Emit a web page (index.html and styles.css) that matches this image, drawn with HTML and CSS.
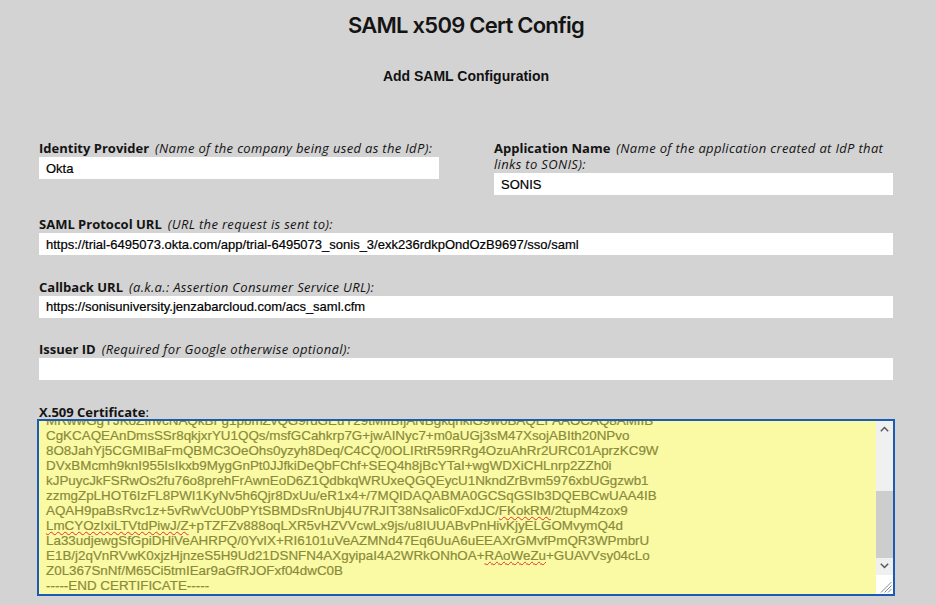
FILE: index.html
```html
<!DOCTYPE html>
<html lang="en">
<head>
<meta charset="utf-8">
<title>SAML x509 Cert Config</title>
<link rel="stylesheet" href="styles.css">
</head>
<body>
<div class="page">
  <h1 class="title">SAML x509 Cert Config</h1>
  <h2 class="subtitle">Add SAML Configuration</h2>
  <form class="form">
    <div class="row">
      <div class="field">
        <label class="label"><b class="name">Identity Provider</b><i class="hint">(Name of the company being used as the IdP):</i></label>
        <input class="input" type="text" value="Okta">
      </div>
      <div class="field">
        <label class="label"><b class="name">Application Name</b><i class="hint">(Name of the application created at IdP that links to SONIS):</i></label>
        <input class="input" type="text" value="SONIS">
      </div>
    </div>
    <div class="field">
      <label class="label"><b class="name">SAML Protocol URL</b><i class="hint">(URL the request is sent to):</i></label>
      <input class="input" type="text" value="https://trial-6495073.okta.com/app/trial-6495073_sonis_3/exk236rdkpOndOzB9697/sso/saml">
    </div>
    <div class="field">
      <label class="label"><b class="name">Callback URL</b><i class="hint">(a.k.a.: Assertion Consumer Service URL):</i></label>
      <input class="input" type="text" value="https://sonisuniversity.jenzabarcloud.com/acs_saml.cfm">
    </div>
    <div class="field">
      <label class="label"><b class="name">Issuer ID</b><i class="hint">(Required for Google otherwise optional):</i></label>
      <input class="input" type="text" value="">
    </div>
    <div class="field">
      <label class="label"><b class="name">X.509 Certificate</b>:</label>
      <div class="cert-box">
        <div class="cert" role="textbox" aria-multiline="true"><pre class="cert-text">-----BEGIN CERTIFICATE-----
MIIDqjCCApKgAwIBAgIGAYhJkz3bMA0GCSqGSIb3DQEBCwUAMIGVMQswCQYDVQQGEwJVUzETMBEG
A1UECAwKQ2FsaWZvcm5pYTEWMBQGA1UEBwwNU2FuIEZyYW5jaXNjbzENMAsGA1UECgwET2t0YTEU
MBIGA1UECwwLU1NPUHJvdmlkZXIxFjAUBgNVBAMMDXRyaWFsLTY0OTUwNzMxHDAaBgkqhkiG9w0B
CQEWDWluZm9Ab2t0YS5jb20wHhcNMjMwNjA1MTQyMzE0WhcNMzMwNjA1MTQyNDE0WjCBlTELMAkG
A1UEBhMCVVMxEzARBgNVBAgMCkNhbGlmb3JuaWExFjAUBgNVBAcMDVNhbiBGcmFuY2lzY28xDTAL
BgNVBAoMBE9rdGExFDASBgNVBAsMC1NTT1Byb3ZpZGVyMRYwFAYDVQQDDA10cmlhbC02NDk1MDcz
MRwwGgYJKoZIhvcNAQkBFg1pbmZvQG9rdGEuY29tMIIBIjANBgkqhkiG9w0BAQEFAAOCAQ8AMIIB
CgKCAQEAnDmsSSr8qkjxrYU1QQs/msfGCahkrp7G+jwAINyc7+m0aUGj3sM47XsojABIth20NPvo
8O8JahYj5CGMIBaFmQBMC3OeOhs0yzyh8Deq/C4CQ/0OLIRtR59RRg4OzuAhRr2URC01AprzKC9W
DVxBMcmh9knI955IsIkxb9MygGnPt0JJfkiDeQbFChf+SEQ4h8jBcYTaI+wgWDXiCHLnrp2ZZh0i
kJPuycJkFSRwOs2fu76o8prehFrAwnEoD6Z1QdbkqWRUxeQGQEycU1NkndZrBvm5976xbUGgzwb1
zzmgZpLHOT6IzFL8PWI1KyNv5h6Qjr8DxUu/eR1x4+/7MQIDAQABMA0GCSqGSIb3DQEBCwUAA4IB
AQAH9paBsRvc1z+5vRwVcU0bPYtSBMDsRnUbj4U7RJIT38Nsalic0FxdJC/<span class="typo">FKokRM</span>/2tupM4zox9
<span class="typo">LmCYOzIxiLTVtdPiwJ/Z</span>+pTZFZv888oqLXR5vHZVVcwLx9js/u8IUUABvPnHivKjyELGOMvymQ4d
La33udjewgSfGpiDHiVeAHRPQ/0YvIX+RI6101uVeAZMNd47Eq6UuA6uEEAXrGMvfPmQR3WPmbrU
E1B/j2qVnRVwK0xjzHjnzeS5H9Ud21DSNFN4AXgyipaI4A2WRkONhOA+<span class="typo">RAoWeZu</span>+GUAVVsy04cLo
Z0L367SnNf/M65Ci5tmIEar9aGfRJOFxf04dwC0B
-----END CERTIFICATE-----</pre></div>
        <div class="scrollbar" aria-hidden="true">
          <span class="sb-btn"><svg width="9" height="6" viewBox="0 0 9 6"><path d="M0.8 5.2 L4.5 1.4 L8.2 5.2" fill="none" stroke="#555" stroke-width="1.4"/></svg></span>
          <span class="sb-track"><span class="sb-thumb"></span></span>
          <span class="sb-btn"><svg width="9" height="6" viewBox="0 0 9 6"><path d="M0.8 0.8 L4.5 4.6 L8.2 0.8" fill="none" stroke="#555" stroke-width="1.4"/></svg></span>
          <span class="sb-corner"><svg width="12" height="12" viewBox="0 0 12 12"><path d="M11.5 1 L1 11.5 M11.5 4.5 L4.5 11.5 M11.5 8 L8 11.5" stroke="#8a8a8a" stroke-width="1"/></svg></span>
        </div>
      </div>
    </div>
  </form>
</div>
</body>
</html>
```

FILE: styles.css
```css
html, body {
  margin: 0;
  padding: 0;
}

body {
  background: #d3d3d3;
  color: #1a1a1a;
  font-family: "Liberation Sans", Arial, sans-serif;
}

.page {
  width: 854px;
  padding: 11px 0 0 39px;
}

.title {
  margin: 0;
  font-family: Inter, "Open Sans", sans-serif;
  font-weight: 600;
  font-size: 22px;
  line-height: 28px;
  letter-spacing: -0.75px;
  text-align: center;
  color: #141414;
}

.subtitle {
  margin: 29px 0 0;
  font-family: "Liberation Sans", Arial, sans-serif;
  font-weight: bold;
  font-size: 14px;
  line-height: 16px;
  text-align: center;
  color: #111;
}

.form {
  margin-top: 56px;
}

.row {
  display: grid;
  grid-template-columns: 400px 399px;
  column-gap: 55px;
  align-items: start;
  margin-bottom: 21px;
}

.field {
  display: flex;
  flex-direction: column;
  margin-bottom: 23.5px;
}

.row .field {
  margin-bottom: 0;
}

.label {
  display: block;
  margin-bottom: 1px;
  font-family: "Open Sans", Lato, sans-serif;
  font-size: 13px;
  line-height: 16px;
  color: #141414;
}

.name {
  font-weight: bold;
}

.hint {
  margin-left: 6px;
  font-style: italic;
  letter-spacing: 0.33px;
}

.input {
  box-sizing: border-box;
  width: 100%;
  height: 22px;
  margin: 0;
  padding: 0 7px;
  border: none;
  background: #fff;
  font-family: "Liberation Sans", Arial, sans-serif;
  font-size: 13px;
  color: #000;
  -webkit-text-stroke: 0.2px #000;
  outline: none;
}

.cert-box {
  display: flex;
  height: 173px;
  outline: 2px solid #1b5bb3;
  background: #fafaa5;
}

.cert {
  flex: 1;
  min-width: 0;
  display: flex;
  flex-direction: column-reverse;
  overflow: hidden;
  padding-left: 7px;
}

.cert-text {
  margin: 0;
  font-family: "Liberation Sans", Arial, sans-serif;
  font-size: 13.4px;
  line-height: 14.95px;
  color: #8a8a3a;
  -webkit-text-stroke: 0.2px #8a8a3a;
  white-space: pre;
}

.typo {
  text-decoration: underline wavy #e0302a;
  text-decoration-thickness: 1px;
  text-underline-offset: 1px;
}

.scrollbar {
  width: 17px;
  display: flex;
  flex-direction: column;
  background: #f0f0f0;
}

.sb-btn {
  height: 17px;
  flex: none;
  display: flex;
  align-items: center;
  justify-content: center;
}

.sb-track {
  flex: 1;
  display: flex;
  flex-direction: column;
  justify-content: flex-end;
}

.sb-thumb {
  height: 67px;
  background: #cdcdcd;
}

.sb-corner {
  height: 18px;
  flex: none;
  display: flex;
  align-items: flex-end;
  justify-content: flex-end;
  background: #fff;
  padding: 0 1px 1px 0;
}
```
